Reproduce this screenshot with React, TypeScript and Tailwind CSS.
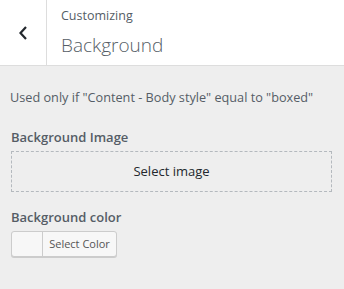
import React from 'react';

const font = { fontFamily: '"Open Sans", "Noto Sans", sans-serif' };

export default function App() {
  return (
    <div className="w-[344px] h-[289px] bg-[#eeeeee] text-[#555d66] overflow-hidden" style={font}>
      {/* header */}
      <div className="flex h-[66px] bg-white border-b border-[#dddddd]">
        <button className="w-[47px] shrink-0 flex items-center justify-center border-r border-[#dddddd]">
          <svg width="10" height="16" viewBox="0 0 10 16" fill="none">
            <path d="M8 2 L2.5 8 L8 14" stroke="#23282d" strokeWidth="2.2" />
          </svg>
        </button>
        <div className="pl-[14px] pt-[7px] flex flex-col">
          <span className="text-[12.5px] leading-[18px]">Customizing</span>
          <span className="text-[19px] leading-[28px] font-light mt-[6px]">Background</span>
        </div>
      </div>

      {/* body */}
      <div className="px-[11px] pt-[22px]">
        <p className="text-[12.7px] leading-[18px] -ml-px">Used only if "Content - Body style" equal to "boxed"</p>

        <div className="mt-[21px] text-[13px] leading-[20px] font-semibold">Background Image</div>
        <button className="mt-[4px] w-[321px] h-[41px] border border-dashed border-[#b4b9be] text-[13px] text-[#23282d] flex items-center justify-center">
          Select image
        </button>

        <div className="mt-[15px] text-[13px] leading-[20px] font-semibold">Background color</div>
        <div className="mt-[4px] flex w-[106px] h-[26px] rounded-[3px] border border-[#cccccc] bg-[#f7f7f7] shadow-[0_1px_0_#cccccc] overflow-hidden">
          <div className="w-[31px] border-r border-[#cccccc]" />
          <span className="flex-1 flex items-center justify-center text-[11px] text-[#555555]">Select Color</span>
        </div>
      </div>
    </div>
  );
}
